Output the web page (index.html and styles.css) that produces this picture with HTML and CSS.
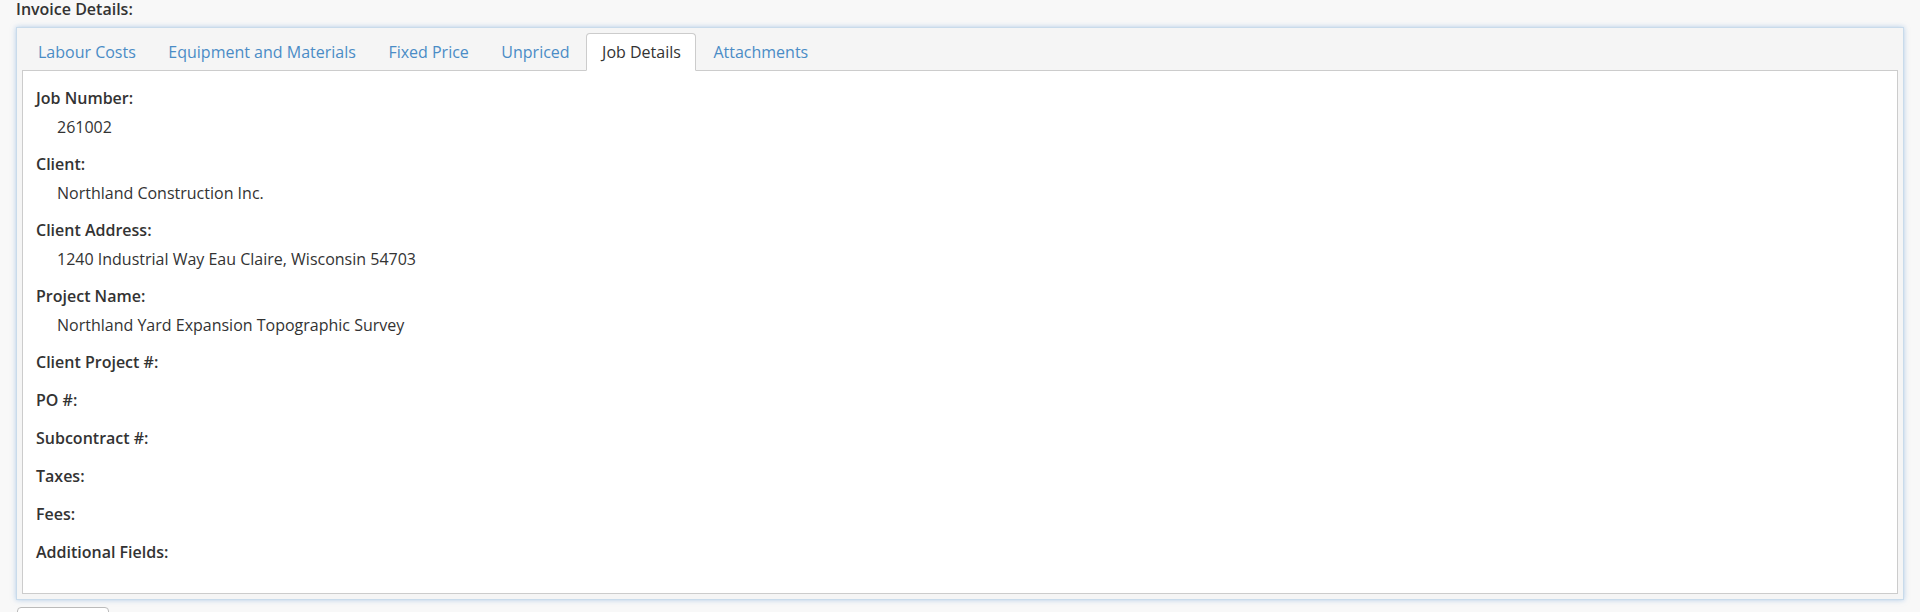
FILE: index.html
```html
<!DOCTYPE html>
<html lang="en">
<head>
<meta charset="utf-8">
<title>Invoice Details</title>
<link rel="stylesheet" href="styles.css">
</head>
<body>
<div class="page">
  <h4 class="section-title">Invoice Details:</h4>
  <div class="panel">
    <ul class="tabs">
      <li class="tab"><a href="#">Labour Costs</a></li>
      <li class="tab"><a href="#">Equipment and Materials</a></li>
      <li class="tab"><a href="#">Fixed Price</a></li>
      <li class="tab"><a href="#">Unpriced</a></li>
      <li class="tab active"><a href="#">Job Details</a></li>
      <li class="tab"><a href="#">Attachments</a></li>
    </ul>
    <div class="tab-content">
      <div class="field">
        <div class="label">Job Number:</div>
        <div class="value">261002</div>
      </div>
      <div class="field">
        <div class="label">Client:</div>
        <div class="value">Northland Construction Inc.</div>
      </div>
      <div class="field">
        <div class="label">Client Address:</div>
        <div class="value">1240 Industrial Way Eau Claire, Wisconsin 54703</div>
      </div>
      <div class="field">
        <div class="label">Project Name:</div>
        <div class="value">Northland Yard Expansion Topographic Survey</div>
      </div>
      <div class="field">
        <div class="label">Client Project #:</div>
      </div>
      <div class="field">
        <div class="label">PO #:</div>
      </div>
      <div class="field">
        <div class="label">Subcontract #:</div>
      </div>
      <div class="field">
        <div class="label">Taxes:</div>
      </div>
      <div class="field">
        <div class="label">Fees:</div>
      </div>
      <div class="field">
        <div class="label">Additional Fields:</div>
      </div>
    </div>
  </div>
  <div class="actions">
    <button class="btn" type="button">Close</button>
  </div>
</div>
</body>
</html>
```

FILE: styles.css
```css
html, body {
  margin: 0;
  padding: 0;
  background: #f8f8f8;
}

body {
  font-family: "Open Sans", "Liberation Sans", sans-serif;
  font-size: 16px;
  line-height: 20px;
  color: #333333;
  overflow: hidden;
}

.page {
  padding: 0 16px;
}

.section-title {
  margin: 0;
  font-size: 16px;
  line-height: 18px;
  font-weight: 600;
  color: #333333;
}

.panel {
  margin-top: 9px;
  background: #f5f5f5;
  border: 1px solid #c9dbeb;
  box-shadow: 0 0 5px rgba(120, 170, 220, 0.55);
  padding: 5px;
}

.tabs {
  list-style: none;
  margin: 0;
  padding: 0;
  display: flex;
  border-bottom: 1px solid #cccccc;
}

.tab {
  margin-right: 1.5px;
  margin-bottom: -1px;
}

.tab a {
  display: block;
  padding: 8px 14px 8px 15px;
  line-height: 20px;
  border: 1px solid transparent;
  border-radius: 4px 4px 0 0;
  color: #4a8cc6;
  text-decoration: none;
}

.tab.active a {
  background: #ffffff;
  border-color: #cccccc #cccccc transparent;
  color: #333333;
}

.tab-content {
  background: #ffffff;
  border: 1px solid #cccccc;
  border-top: none;
  padding: 17px 13px 13px;
}

.field {
  margin-bottom: 18px;
}

.label {
  font-weight: 600;
  line-height: 20px;
}

.value {
  margin-top: 9px;
  margin-bottom: -1px;
  padding-left: 21px;
  line-height: 20px;
}

.actions {
  margin-top: 7px;
}

.btn {
  font-family: "Open Sans", "Liberation Sans", sans-serif;
  font-size: 16px;
  line-height: 20px;
  color: #333333;
  background: #ffffff;
  border: 1px solid #bbbbbb;
  border-radius: 4px;
  padding: 5px 12px;
  width: 92px;
  margin-left: 1px;
}
```
